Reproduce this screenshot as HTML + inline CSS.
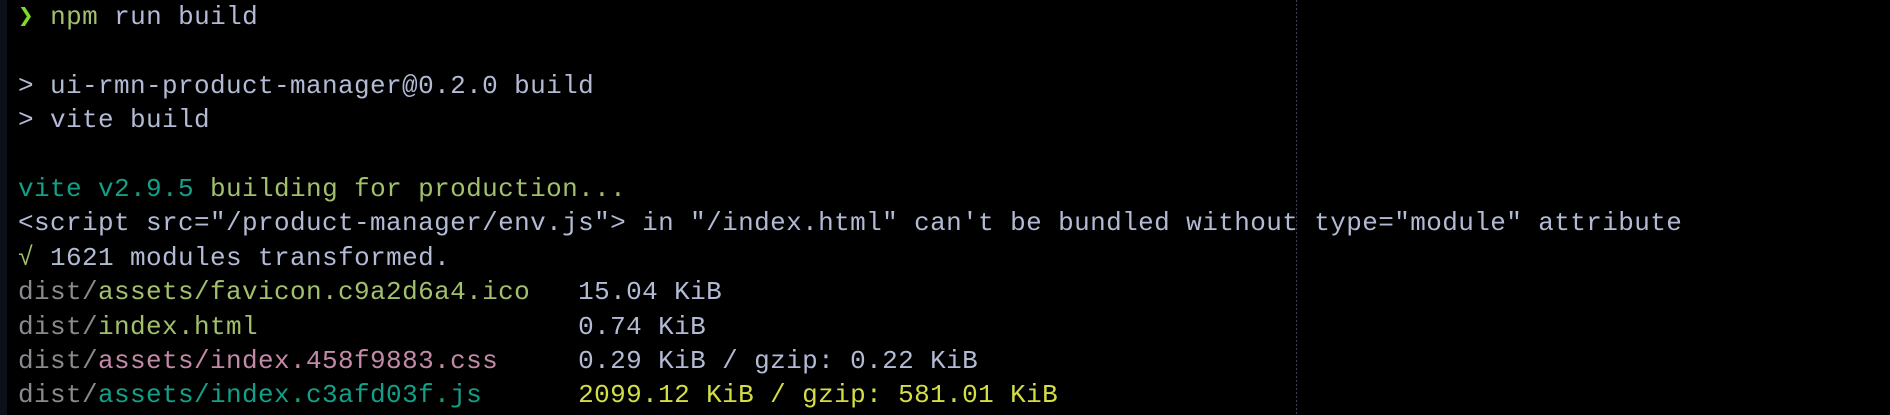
<!DOCTYPE html>
<html><head><meta charset="utf-8"><style>
html,body{margin:0;padding:0;background:#000;width:1890px;height:415px;overflow:hidden}
.bar{position:absolute;left:0;top:0;width:7px;height:415px;background:#0c1018}
.vl{position:absolute;left:1296px;top:0;width:1px;height:415px;background:repeating-linear-gradient(to bottom,#3c4158 0 2px,transparent 2px 4px)}
pre{position:absolute;left:18px;top:0;margin:0;font-family:"Liberation Mono","DejaVu Sans Mono",monospace;font-size:26px;letter-spacing:0.4px;line-height:34.4px;color:#b3bad4;white-space:pre}
.p{color:#7ddc2a;font-weight:bold}.g{color:#a2c06c}.t{color:#12a088}.d{color:#8a8a8e}
.k{color:#c28aa8}.y{color:#d4de44}.c{color:#a2c06c}
</style></head><body>
<div class="bar"></div><div class="vl"></div>
<pre><span class="p">❯</span> <span class="g">npm</span> run build

&gt; ui-rmn-product-manager@0.2.0 build
&gt; vite build

<span class="t">vite v2.9.5</span> <span class="g">building for production...</span>
&lt;script src="/product-manager/env.js"&gt; in "/index.html" can't be bundled without type="module" attribute
<span class="c">√</span> 1621 modules transformed.
<span class="d">dist/</span><span class="g">assets/favicon.c9a2d6a4.ico</span>   15.04 KiB
<span class="d">dist/</span><span class="g">index.html</span>                    0.74 KiB
<span class="d">dist/</span><span class="k">assets/index.458f9883.css</span>     0.29 KiB / gzip: 0.22 KiB
<span class="d">dist/</span><span class="t">assets/index.c3afd03f.js</span>      <span class="y">2099.12 KiB / gzip: 581.01 KiB</span></pre>
</body></html>
